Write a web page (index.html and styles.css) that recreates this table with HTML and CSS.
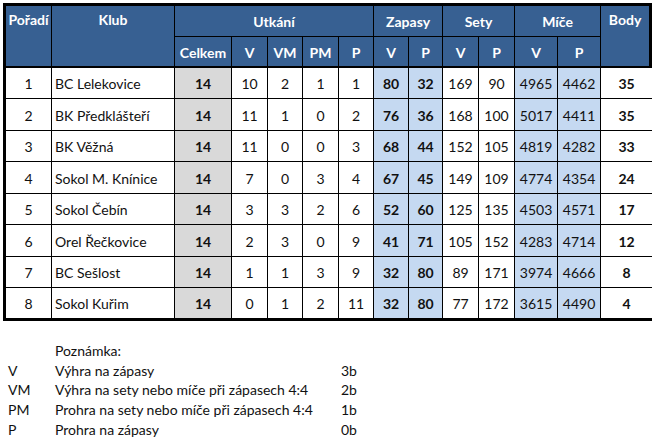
FILE: index.html
```html
<!DOCTYPE html>
<html lang="cs">
<head>
<meta charset="utf-8">
<title>Tabulka</title>
<link rel="stylesheet" href="styles.css">
</head>
<body>
<table class="standings">
  <colgroup>
    <col class="c-rank"><col class="c-club"><col class="c-total">
    <col class="c-n35"><col class="c-n34"><col class="c-n35"><col class="c-n34">
    <col class="c-n34"><col class="c-n33"><col class="c-n35"><col class="c-n35">
    <col class="c-n42"><col class="c-n42"><col class="c-body">
  </colgroup>
  <thead>
    <tr class="h1">
      <th rowspan="2" class="top">Pořadí</th>
      <th rowspan="2" class="top">Klub</th>
      <th colspan="5">Utkání</th>
      <th colspan="2">Zapasy</th>
      <th colspan="2">Sety</th>
      <th colspan="2">Míče</th>
      <th rowspan="2" class="top last">Body</th>
    </tr>
    <tr class="h2">
      <th>Celkem</th><th>V</th><th>VM</th><th>PM</th><th>P</th>
      <th>V</th><th>P</th><th>V</th><th>P</th><th>V</th><th>P</th>
    </tr>
  </thead>
  <tbody>
    <tr class="r30"><td>1</td><td class="club">BC Lelekovice</td><td class="gray b">14</td><td>10</td><td>2</td><td>1</td><td>1</td><td class="blue b">80</td><td class="blue b">32</td><td>169</td><td>90</td><td class="blue">4965</td><td class="blue">4462</td><td class="b last">35</td></tr>
    <tr class="r31"><td>2</td><td class="club">BK Předklášteří</td><td class="gray b">14</td><td>11</td><td>1</td><td>0</td><td>2</td><td class="blue b">76</td><td class="blue b">36</td><td>168</td><td>100</td><td class="blue">5017</td><td class="blue">4411</td><td class="b last">35</td></tr>
    <tr class="r30"><td>3</td><td class="club">BK Věžná</td><td class="gray b">14</td><td>11</td><td>0</td><td>0</td><td>3</td><td class="blue b">68</td><td class="blue b">44</td><td>152</td><td>105</td><td class="blue">4819</td><td class="blue">4282</td><td class="b last">33</td></tr>
    <tr class="r31"><td>4</td><td class="club">Sokol M. Knínice</td><td class="gray b">14</td><td>7</td><td>0</td><td>3</td><td>4</td><td class="blue b">67</td><td class="blue b">45</td><td>149</td><td>109</td><td class="blue">4774</td><td class="blue">4354</td><td class="b last">24</td></tr>
    <tr class="r30"><td>5</td><td class="club">Sokol Čebín</td><td class="gray b">14</td><td>3</td><td>3</td><td>2</td><td>6</td><td class="blue b">52</td><td class="blue b">60</td><td>125</td><td>135</td><td class="blue">4503</td><td class="blue">4571</td><td class="b last">17</td></tr>
    <tr class="r31"><td>6</td><td class="club">Orel Řečkovice</td><td class="gray b">14</td><td>2</td><td>3</td><td>0</td><td>9</td><td class="blue b">41</td><td class="blue b">71</td><td>105</td><td>152</td><td class="blue">4283</td><td class="blue">4714</td><td class="b last">12</td></tr>
    <tr class="r30"><td>7</td><td class="club">BC Sešlost</td><td class="gray b">14</td><td>1</td><td>1</td><td>3</td><td>9</td><td class="blue b">32</td><td class="blue b">80</td><td>89</td><td>171</td><td class="blue">3974</td><td class="blue">4666</td><td class="b last">8</td></tr>
    <tr class="rlast"><td>8</td><td class="club">Sokol Kuřim</td><td class="gray b">14</td><td>0</td><td>1</td><td>2</td><td>11</td><td class="blue b">32</td><td class="blue b">80</td><td>77</td><td>172</td><td class="blue">3615</td><td class="blue">4490</td><td class="b last">4</td></tr>
  </tbody>
</table>

<div class="note">
  <div></div><div>Poznámka:</div><div></div>
  <div>V</div><div>Výhra na zápasy</div><div>3b</div>
  <div>VM</div><div>Výhra na sety nebo míče při zápasech 4:4</div><div>2b</div>
  <div>PM</div><div>Prohra na sety nebo míče při zápasech 4:4</div><div>1b</div>
  <div>P</div><div>Prohra na zápasy</div><div>0b</div>
</div>
</body>
</html>
```

FILE: styles.css
```css
html, body {
  margin: 0;
  padding: 0;
  background: #ffffff;
}

body {
  font-family: Lato, "Liberation Sans", sans-serif;
  font-size: 14px;
  color: #111111;
  width: 654px;
  height: 440px;
  overflow: hidden;
}

.standings {
  margin: 3px 0 0 3px;
  border-collapse: separate;
  border-spacing: 0;
  table-layout: fixed;
  width: 649px;
  border-top: 3px solid #000;
  border-left: 3px solid #000;
  border-bottom: 3px solid #000;
}

.c-rank { width: 46px; }
.c-club { width: 123px; }
.c-total { width: 57px; }
.c-n35 { width: 36px; }
.c-n34 { width: 35px; }
.c-n33 { width: 34px; }
.c-n42 { width: 43px; }
.c-body { width: 51px; }

.standings th,
.standings td {
  box-sizing: border-box;
  padding: 0;
  text-align: center;
  vertical-align: middle;
  border-right: 1px solid #000;
  border-bottom: 1px solid #000;
  white-space: nowrap;
  overflow: hidden;
}

.standings th {
  background: #376092;
  color: #ffffff;
  font-weight: 700;
}

.standings .h1 th { height: 31px; }
.standings .h2 th {
  height: 31px;
  border-bottom-width: 2px;
  padding-top: 2px;
}
.standings th.top {
  vertical-align: top;
  padding-top: 5px;
  border-bottom-width: 2px;
}
.standings th.last { border-right: 3px solid #000; }

.standings .r30 td { height: 31px; }
.standings .r31 td { height: 32px; }
.standings .rlast td { height: 30px; border-bottom: 0; }
.standings td { padding-top: 1px; }
.standings td.last { border-right: 0; }

.standings td.club {
  text-align: left;
  padding-left: 3px;
}
.standings td.gray { background: #d9d9d9; }
.standings td.blue { background: #c5d9f1; }
.standings td.b { font-weight: 700; }

.note {
  display: grid;
  grid-template-columns: 47px 286px auto;
  margin: 20px 0 0 8px;
  line-height: 19.7px;
  color: #111111;
}
```
